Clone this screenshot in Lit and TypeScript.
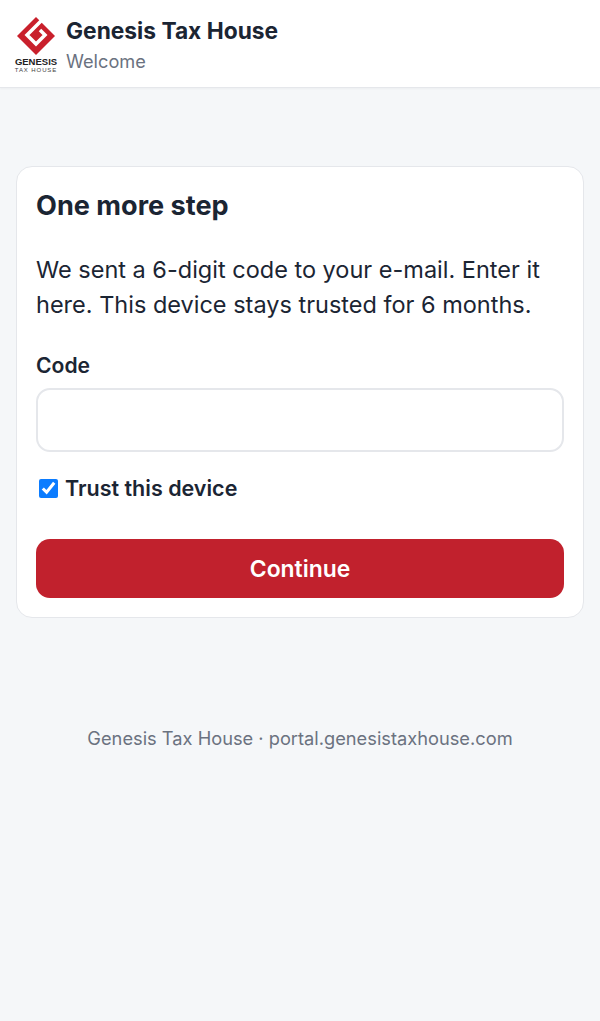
import { LitElement, html, css } from "lit";
import { customElement } from "lit/decorators.js";

@customElement("app-root")
export class AppRoot extends LitElement {
  static styles = css`
    :host { display: block; min-height: 1021px; background: #f5f7f9; color: #1b2533; font-family: Inter, "Liberation Sans", sans-serif; }
    .top { display: flex; align-items: center; gap: 9px; height: 88px; box-sizing: border-box; padding: 0 15px; background: #fff; border-bottom: 1px solid #e5e7eb; box-shadow: 0 1px 2px rgba(0,0,0,.04); }
    .logo { width: 42px; padding-top: 3px; display: flex; flex-direction: column; align-items: center; }
    .logo svg { display: block; }
    .g { font: 700 9.5px/9px "Liberation Sans", sans-serif; color: #222; margin-top: 2px; }
    .t { font: 400 6px/8px "Liberation Sans", sans-serif; letter-spacing: .9px; color: #444; white-space: nowrap; }
    .text { padding-top: 4px; }
    .brand { font-size: 22.75px; font-weight: 700; line-height: 31px; }
    .sub { font-size: 18.2px; line-height: 31px; color: #6b7280; }
    main { padding: 78px 16px 0; }
    .card { background: #fff; border: 1px solid #e5e7eb; border-radius: 16px; padding: 20px 19px 19px; }
    h1 { margin: 0; font-size: 27.1px; line-height: 38px; font-weight: 700; }
    p { margin: 27px 0 0; font-size: 23.5px; line-height: 35px; }
    label.code { display: block; margin-top: 29px; font-size: 21.1px; line-height: 30px; font-weight: 600; }
    input.in { display: block; box-sizing: border-box; width: 100%; height: 64px; margin-top: 7px; border: 2px solid #e5e7eb; border-radius: 14px; background: #fff; }
    .trust { display: flex; align-items: center; gap: 7px; margin-top: 20px; font-size: 21.5px; line-height: 32px; font-weight: 600; }
    .trust input { width: 19px; height: 19px; margin: 0 0 0 3px; accent-color: #0b7cff; }
    button { display: block; width: 100%; height: 59px; margin-top: 35px; border: 0; border-radius: 14px; background: #c1212d; color: #fff; font: 600 22.9px Inter, "Liberation Sans", sans-serif; }
    footer { margin-top: 106px; text-align: center; font-size: 18.25px; line-height: 28px; color: #6b7280; }
  `;
  render() {
    return html`
      <div class="top">
        <div class="logo">
          <svg width="40" height="38" viewBox="0 0 40 38">
            <path fill="#c9202c" d="M20 0 39 19 20 38 1 19Z"/>
            <path fill="none" stroke="#fff" stroke-width="3.5" d="M26 3 11 18 20 27 29 18 24 13"/>
          </svg>
          <div class="g">GENESIS</div>
          <div class="t">TAX HOUSE</div>
        </div>
        <div class="text">
          <div class="brand">Genesis Tax House</div>
          <div class="sub">Welcome</div>
        </div>
      </div>
      <main>
        <div class="card">
          <h1>One more step</h1>
          <p>We sent a 6-digit code to your e-mail. Enter it here. This device stays trusted for 6 months.</p>
          <label class="code">Code</label>
          <input class="in" />
          <label class="trust"><input type="checkbox" checked /><span>Trust this device</span></label>
          <button>Continue</button>
        </div>
        <footer>Genesis Tax House · portal.genesistaxhouse.com</footer>
      </main>
    `;
  }
}
